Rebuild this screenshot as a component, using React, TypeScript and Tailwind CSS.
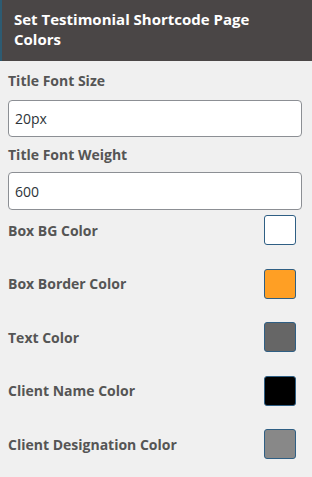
import React from 'react'

const font = { fontFamily: '"Open Sans", "Noto Sans", sans-serif' }

const colorRows = [
    { label: 'Box BG Color', color: 'bg-white' },
    { label: 'Box Border Color', color: 'bg-[#ff9f24]' },
    { label: 'Text Color', color: 'bg-[#666666]' },
    { label: 'Client Name Color', color: 'bg-black' },
    { label: 'Client Designation Color', color: 'bg-[#888888]' },
]

export default function App() {
    return (
        <div className="w-[312px] h-[477px] bg-[#f0f0f0] font-['Open_Sans',sans-serif]" style={font}>
            {/* Header */}
            <div className="h-[61px] bg-[#4a4646] border-l-2 border-[#2d5b72] px-3 pt-[9px]">
                <h2 className="text-white text-[15px] font-bold leading-[20px]">
                    Set Testimonial Shortcode Page Colors
                </h2>
            </div>

            <div className="px-2">
                {/* Text inputs */}
                <label className="block pt-[10px] text-[14px] font-bold text-[#555] leading-[19px]">
                    Title Font Size
                </label>
                <input
                    readOnly
                    value="20px"
                    className="mt-[10px] w-[294px] h-[37px] bg-white border border-[#8c8f94] rounded-[4px] px-[6px] text-[14px] text-[#2c3338] outline-none"
                />
                <label className="block pt-[8px] text-[14px] font-bold text-[#555] leading-[19px]">
                    Title Font Weight
                </label>
                <input
                    readOnly
                    value="600"
                    className="mt-[8px] w-[294px] h-[38px] bg-white border border-[#8c8f94] rounded-[4px] px-[6px] text-[14px] text-[#2c3338] outline-none"
                />

                {/* Color pickers */}
                <div className="flex flex-col gap-[23.5px] pt-[5px]">
                    {colorRows.map((row) => (
                        <div key={row.label} className="flex items-center justify-between pr-[8px]">
                            <span className="text-[14px] font-bold text-[#555]">{row.label}</span>
                            <span
                                className={`w-[32px] h-[30px] rounded-[3px] border border-[#2f5f84] ${row.color}`}
                            />
                        </div>
                    ))}
                </div>
            </div>
        </div>
    )
}
